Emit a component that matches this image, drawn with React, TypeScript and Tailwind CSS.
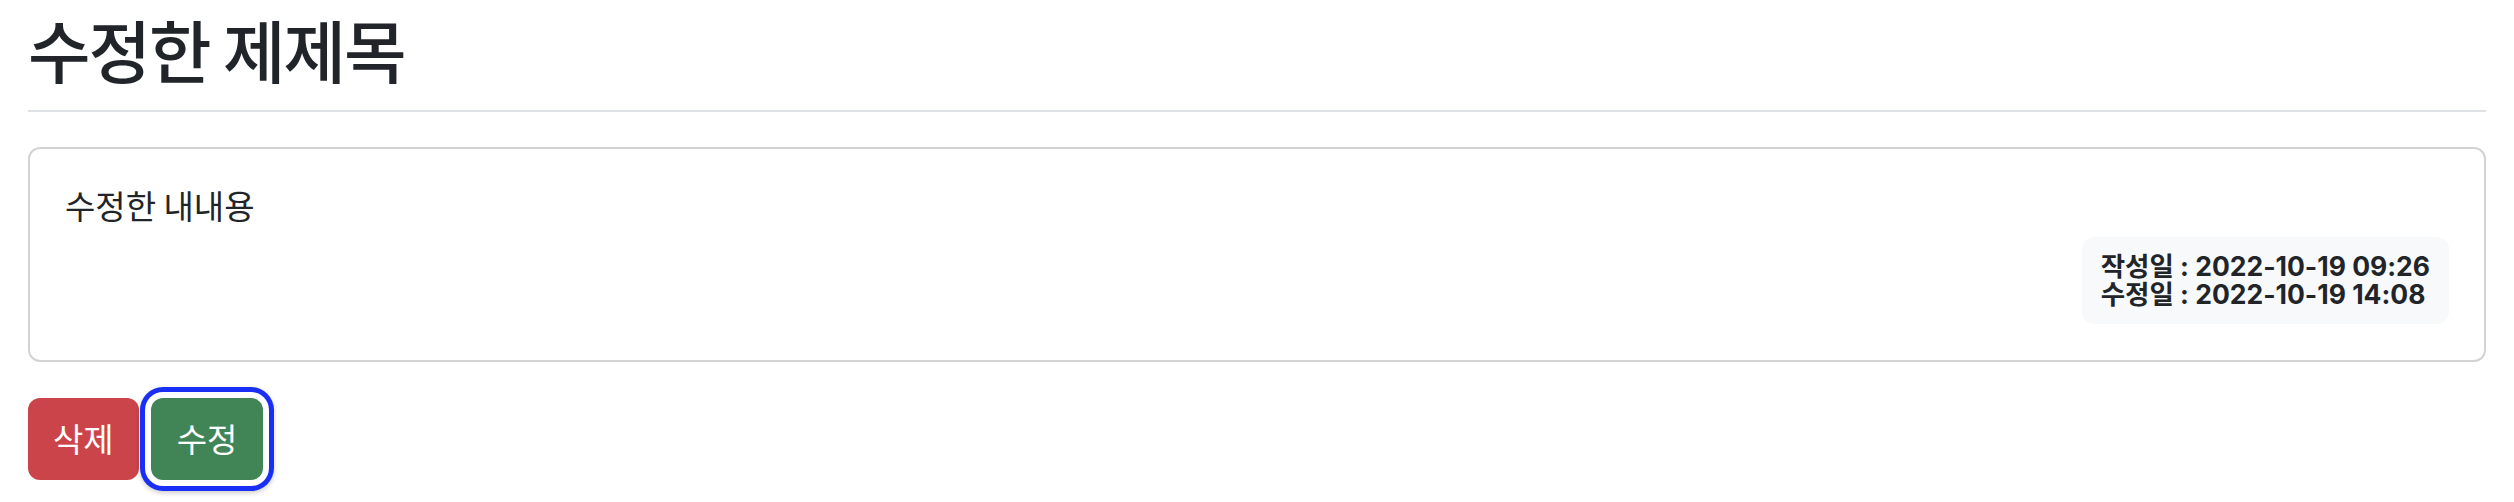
const font = { fontFamily: '"Noto Sans CJK KR", "Noto Sans", sans-serif' }

export default function App() {
  return (
    <main className="min-h-screen bg-white px-[28px] pt-[8px] text-[#212529]" style={font}>
      <div className="border-b-2 border-[#dee2e6] pb-[20px]">
        <h2 className="text-[68px] font-medium leading-[1.2] tracking-[-2px]">수정한 제제목</h2>
      </div>

      <section className="mt-[35px] rounded-[12px] border-2 border-[#d3d3d3] pb-[36px] pl-[35px] pr-[35px] pt-[32px]">
        <p className="text-[33px] leading-[48px]">수정한 내내용</p>
        <div className="mt-[8px] flex justify-end">
          <div
            className="flex h-[87px] flex-col justify-center rounded-[12px] bg-[#f8f9fa] px-[19px] text-[26.5px] font-bold leading-[28px]"
            style={{ fontFamily: 'Inter, "Noto Sans CJK KR", sans-serif' }}
          >
            <span className="block">작성일 : 2022-10-19 09:26</span>
            <span className="block">수정일 : 2022-10-19 14:08</span>
          </div>
        </div>
      </section>

      <div className="mt-[36px] flex gap-[12px]">
        <button className="h-[82px] rounded-[12px] bg-[#cb444a] px-[25px] text-[33px] text-white">
          삭제
        </button>
        <button className="h-[82px] rounded-[12px] bg-[#418557] px-[26px] text-[33px] text-white shadow-[0_0_0_6px_#ffffff,0_0_0_11px_#1a2ff5,0_2px_5px_11px_rgba(0,0,0,0.2)]">
          수정
        </button>
      </div>
    </main>
  )
}
